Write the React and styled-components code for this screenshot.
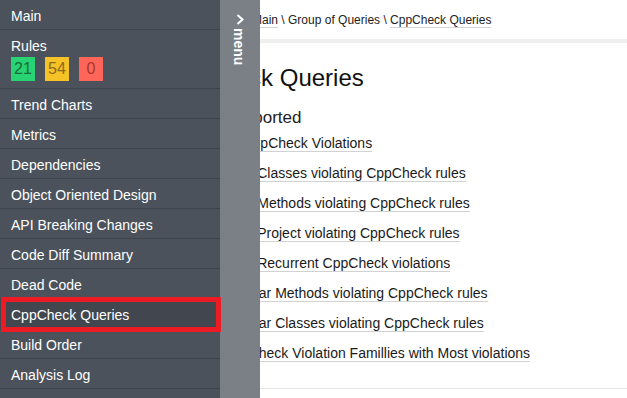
import React from 'react';
import styled, { createGlobalStyle } from 'styled-components';

const GlobalStyle = createGlobalStyle`
  html, body {
    margin: 0;
    padding: 0;
    background: #ffffff;
    font-family: "Liberation Sans", Arial, sans-serif;
  }
`;

const NAV_ITEMS = [
  'Trend Charts',
  'Metrics',
  'Dependencies',
  'Object Oriented Design',
  'API Breaking Changes',
  'Code Diff Summary',
  'Dead Code',
  'CppCheck Queries',
  'Build Order',
  'Analysis Log',
  '',
];

const QUERIES = [
  'All CppCheck Violations',
  'Most Classes violating CppCheck rules',
  'Most Methods violating CppCheck rules',
  'Most Project violating CppCheck rules',
  'Most Recurrent CppCheck violations',
  'Popular Methods violating CppCheck rules',
  'Popular Classes violating CppCheck rules',
  'CppCheck Violation Famillies with Most violations',
];

const Page = styled.div`
  position: relative;
  width: 627px;
  height: 398px;
  overflow: hidden;
  color: #1a1a1a;
`;

const Header = styled.div`
  height: 43px;
  box-sizing: border-box;
  padding: 13px 0 0 252px;
  border-bottom: 4px solid #eeeeee;
  font-size: 12px;
  line-height: 14px;
  color: #222;
  white-space: nowrap;
`;

const Crumb = styled.a`
  color: #222;
  text-decoration: none;
  border-bottom: 1px solid #d4d4d4;
`;

const Content = styled.main`
  padding: 21px 0 0 161px;
  white-space: nowrap;
`;

const Title = styled.h1`
  margin: 0;
  font-size: 24px;
  line-height: 28px;
  font-weight: normal;
  color: #111;
`;

const Section = styled.section`
  margin: 16px 0 0 62px;
`;

const SectionTitle = styled.h2`
  margin: 0;
  font-size: 17px;
  line-height: 20px;
  font-weight: normal;
  color: #222;
`;

const QueryList = styled.ul`
  list-style: none;
  margin: 0 0 20px;
  padding: 0;
`;

const QueryItem = styled.li`
  font-size: 14px;
  line-height: 30px;
  height: 30px;
`;

const QueryLink = styled.a`
  color: #1a1a1a;
  text-decoration: none;
  border-bottom: 1px solid #d2d2d2;
`;

const Footer = styled.div`
  border-top: 1px solid #e6e6e6;
`;

const Sidebar = styled.aside`
  position: absolute;
  top: 0;
  left: 0;
  bottom: 0;
  display: flex;
`;

const Nav = styled.nav`
  width: 220px;
  background: #4b525b;
  display: flex;
  flex-direction: column;
`;

const NavItem = styled.div`
  position: relative;
  flex: none;
  height: ${({ $tall }) => ($tall ? '59px' : '30px')};
  padding: 8px 0 0 11px;
  box-sizing: border-box;
  border-bottom: 1px solid #3e444c;
  font-size: 14px;
  line-height: 16px;
  color: #ffffff;
  background: ${({ $active }) => ($active ? '#42474f' : 'transparent')};
  ${({ $active }) =>
    $active &&
    `
    &::after {
      content: '';
      position: absolute;
      top: -2px;
      bottom: -4px;
      left: 1px;
      right: -1px;
      border: 5px solid #ed1c24;
    }
  `}
`;

const NavLabel = styled.div`
  height: 16px;
`;

const Badges = styled.div`
  display: flex;
  gap: 10px;
  margin-top: 3px;
`;

const Badge = styled.span`
  width: 24px;
  height: 24px;
  display: flex;
  align-items: center;
  justify-content: center;
  font-size: 16px;
  background: ${({ $bg }) => $bg};
  color: ${({ $fg }) => $fg};
`;

const MenuTab = styled.div`
  width: 40px;
  background: #7b8087;
  display: flex;
  flex-direction: column;
  align-items: center;
  padding-top: 14px;
  box-sizing: border-box;
  color: #ffffff;
`;

const MenuText = styled.span`
  writing-mode: vertical-rl;
  font-size: 14px;
  font-weight: bold;
  line-height: 14px;
  margin-top: 3px;
  margin-left: -2px;
`;

function Chevron() {
  return (
    <svg width="8" height="11" viewBox="0 0 8 11">
      <polyline points="1.5,1 6.5,5.5 1.5,10" fill="none" stroke="#ffffff" strokeWidth="2" />
    </svg>
  );
}

export default function App() {
  return (
    <Page>
      <GlobalStyle />
      <Header>
        <Crumb href="#">Main</Crumb> \ Group of Queries \ <Crumb href="#">CppCheck Queries</Crumb>
      </Header>
      <Content>
        <Title>CppCheck Queries</Title>
        <Section>
          <SectionTitle>Supported</SectionTitle>
          <QueryList>
            {QUERIES.map((q) => (
              <QueryItem key={q}>
                <QueryLink href="#">{q}</QueryLink>
              </QueryItem>
            ))}
          </QueryList>
        </Section>
        <Footer />
      </Content>
      <Sidebar>
        <Nav>
          <NavItem>Main</NavItem>
          <NavItem $tall>
            <NavLabel>Rules</NavLabel>
            <Badges>
              <Badge $bg="#27d372" $fg="#176b3a">21</Badge>
              <Badge $bg="#f5c327" $fg="#8c6a1c">54</Badge>
              <Badge $bg="#ff6659" $fg="#a8372d">0</Badge>
            </Badges>
          </NavItem>
          {NAV_ITEMS.map((item, i) => (
            <NavItem key={i} $active={item === 'CppCheck Queries'}>
              {item}
            </NavItem>
          ))}
        </Nav>
        <MenuTab>
          <Chevron />
          <MenuText>menu</MenuText>
        </MenuTab>
      </Sidebar>
    </Page>
  );
}
